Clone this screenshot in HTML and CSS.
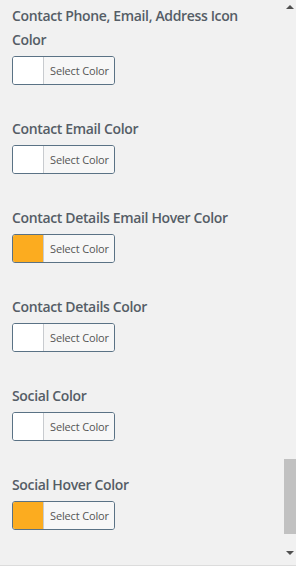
FILE: index.html
```html
<!DOCTYPE html>
<html lang="en">
<head>
    <meta charset="UTF-8">
    <meta name="viewport" content="width=device-width, initial-scale=1.0">
    <title>Customizer Colors</title>
    <link rel="stylesheet" href="styles.css">
</head>
<body>
    <div class="panel">
        <div class="controls">
            <div class="control">
                <span class="control-title">Contact Phone, Email, Address Icon Color</span>
                <button class="color-result" type="button">
                    <span class="swatch"></span>
                    <span class="result-text">Select Color</span>
                </button>
            </div>
            <div class="control">
                <span class="control-title">Contact Email Color</span>
                <button class="color-result" type="button">
                    <span class="swatch"></span>
                    <span class="result-text">Select Color</span>
                </button>
            </div>
            <div class="control">
                <span class="control-title">Contact Details Email Hover Color</span>
                <button class="color-result" type="button">
                    <span class="swatch swatch-orange"></span>
                    <span class="result-text">Select Color</span>
                </button>
            </div>
            <div class="control">
                <span class="control-title">Contact Details Color</span>
                <button class="color-result" type="button">
                    <span class="swatch"></span>
                    <span class="result-text">Select Color</span>
                </button>
            </div>
            <div class="control">
                <span class="control-title">Social Color</span>
                <button class="color-result" type="button">
                    <span class="swatch"></span>
                    <span class="result-text">Select Color</span>
                </button>
            </div>
            <div class="control">
                <span class="control-title">Social Hover Color</span>
                <button class="color-result" type="button">
                    <span class="swatch swatch-orange"></span>
                    <span class="result-text">Select Color</span>
                </button>
            </div>
        </div>
        <div class="scrollbar">
            <div class="arrow arrow-up"></div>
            <div class="track-space"></div>
            <div class="thumb"></div>
            <div class="track-end"></div>
            <div class="arrow arrow-down"></div>
        </div>
    </div>
</body>
</html>
```

FILE: styles.css
```css
html, body {
    margin: 0;
    padding: 0;
}
body {
    background: #f1f1f1;
    font-family: "Open Sans", "Noto Sans", sans-serif;
    overflow: hidden;
}
.panel {
    display: flex;
    height: 565px;
    border-bottom: 1px solid #dcdcdc;
}
.controls {
    flex: 1;
    padding: 4px 12px 0 12px;
}
.control {
    margin-bottom: 32px;
}
.control-title {
    display: block;
    font-size: 14px;
    font-weight: 600;
    line-height: 24px;
    letter-spacing: -0.35px;
    color: #555d66;
    margin-bottom: 4px;
}
.color-result {
    display: flex;
    align-items: stretch;
    height: 29px;
    width: 103px;
    padding: 0;
    border: 1px solid #5a7285;
    border-radius: 3px;
    background: #f7f7f7;
    overflow: hidden;
    cursor: pointer;
}
.swatch {
    width: 30px;
    background: #ffffff;
    border-right: 1px solid #c8cbcf;
}
.swatch-orange {
    background: #fcac1f;
}
.result-text {
    flex: 1;
    display: flex;
    align-items: center;
    padding-left: 6px;
    font-family: "Open Sans", "Noto Sans", sans-serif;
    font-size: 11px;
    letter-spacing: -0.15px;
    color: #555;
    background: #f7f7f7;
}
.scrollbar {
    width: 12px;
    display: flex;
    flex-direction: column;
    background: #f1f1f1;
}
.arrow {
    height: 17px;
    display: flex;
    justify-content: center;
    align-items: center;
}
.arrow::before {
    content: "";
    width: 0;
    height: 0;
    border-left: 4px solid transparent;
    border-right: 4px solid transparent;
}
.arrow-up {
    align-items: flex-start;
    padding-top: 5px;
    box-sizing: border-box;
}
.arrow-up::before {
    border-bottom: 4px solid #505050;
}
.arrow-down {
    align-items: flex-end;
    padding-bottom: 10px;
    box-sizing: border-box;
}
.arrow-down::before {
    border-top: 4px solid #505050;
}
.track-space {
    flex: 1;
}
.thumb {
    height: 75px;
    background: #c1c1c1;
}
.track-end {
    height: 14px;
}
```
